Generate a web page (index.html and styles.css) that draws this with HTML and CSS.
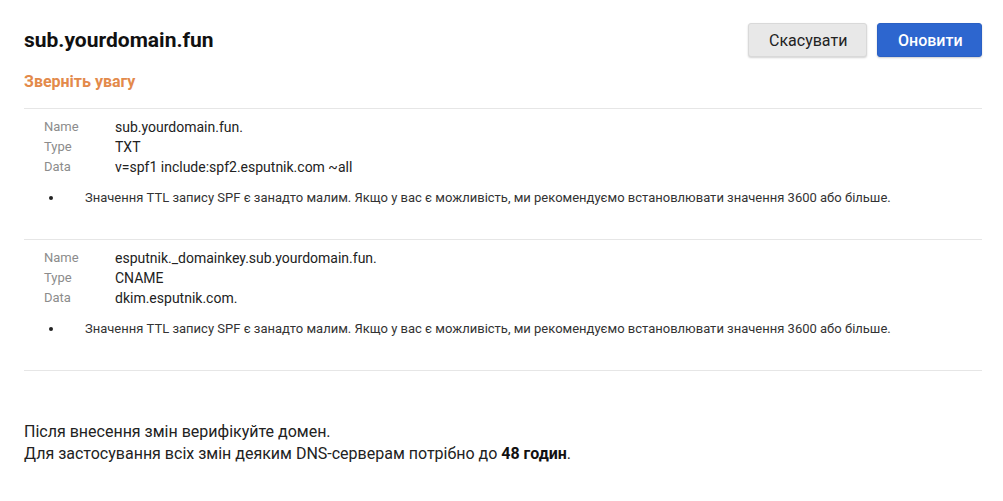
FILE: index.html
```html
<!DOCTYPE html>
<html lang="uk">
<head>
<meta charset="utf-8">
<title>DNS</title>
<link rel="stylesheet" href="styles.css">
</head>
<body>
<div class="page">
  <header class="header">
    <h1 class="title">sub.yourdomain.fun</h1>
    <div class="actions">
      <button class="btn btn-cancel">Скасувати</button>
      <button class="btn btn-primary">Оновити</button>
    </div>
  </header>
  <div class="notice">Зверніть увагу</div>

  <section class="record">
    <div class="fields">
      <div class="label">Name</div><div class="value">sub.yourdomain.fun.</div>
      <div class="label">Type</div><div class="value">TXT</div>
      <div class="label">Data</div><div class="value">v=spf1 include:spf2.esputnik.com ~all</div>
    </div>
    <ul class="warnings">
      <li class="warning"><span class="dot"></span><span>Значення TTL запису SPF є занадто малим. Якщо у вас є можливість, ми рекомендуємо встановлювати значення 3600 або більше.</span></li>
    </ul>
  </section>

  <section class="record">
    <div class="fields">
      <div class="label">Name</div><div class="value">esputnik._domainkey.sub.yourdomain.fun.</div>
      <div class="label">Type</div><div class="value">CNAME</div>
      <div class="label">Data</div><div class="value">dkim.esputnik.com.</div>
    </div>
    <ul class="warnings">
      <li class="warning"><span class="dot"></span><span>Значення TTL запису SPF є занадто малим. Якщо у вас є можливість, ми рекомендуємо встановлювати значення 3600 або більше.</span></li>
    </ul>
  </section>

  <div class="footer">
    <p>Після внесення змін верифікуйте домен.</p>
    <p>Для застосування всіх змін деяким DNS-серверам потрібно до <b>48 годин</b>.</p>
  </div>
</div>
</body>
</html>
```

FILE: styles.css
```css
* { box-sizing: border-box; }
html, body { margin: 0; padding: 0; background: #fff; }
body {
  font-family: Roboto, "Noto Sans", "Liberation Sans", sans-serif;
  color: #222;
}
.page {
  width: 1003px;
  padding: 23px 21px 0 24px;
}
.header {
  display: flex;
  justify-content: space-between;
  align-items: center;
  height: 34px;
}
.title {
  margin: 0;
  font-size: 21px;
  font-weight: 700;
  color: #111;
  letter-spacing: 0;
}
.actions {
  display: flex;
  gap: 10px;
}
.btn {
  font-family: Roboto, "Noto Sans", "Liberation Sans", sans-serif;
  font-size: 16px;
  height: 34px;
  border-radius: 3px;
  padding: 0 20px;
  cursor: pointer;
}
.btn-cancel {
  width: 119px;
  background: #e8e8e8;
  border: 1px solid #d9d9d9;
  color: #222;
  box-shadow: 0 1px 2px rgba(0,0,0,0.18);
}
.btn-primary {
  width: 105px;
  background: #2d66cf;
  border: 1px solid #2a60c4;
  color: #fff;
  font-weight: 500;
  box-shadow: 0 1px 2px rgba(0,0,0,0.2);
}
.notice {
  margin-top: 16px;
  font-size: 16px;
  font-weight: 700;
  color: #e38a4b;
  line-height: 18px;
  padding-bottom: 17px;
  border-bottom: 1px solid #e6e6e6;
}
.record {
  padding: 8px 0 31px 20px;
  border-bottom: 1px solid #e6e6e6;
}
.fields {
  display: grid;
  grid-template-columns: 71px 1fr;
  line-height: 20px;
}
.label {
  font-size: 13px;
  color: #8c8c8c;
}
.value {
  font-size: 14px;
  color: #222;
}
.warnings {
  list-style: none;
  margin: 11px 0 0 0;
  padding: 0;
}
.warning {
  display: flex;
  align-items: center;
  font-size: 13px;
  line-height: 20px;
  color: #333;
}
.dot {
  width: 4px;
  height: 4px;
  border-radius: 50%;
  background: #222;
  margin-left: 5px;
  margin-right: 32px;
  flex: none;
}
.footer {
  margin-top: 50px;
  font-size: 16px;
  line-height: 22px;
  color: #222;
}
.footer p { margin: 0; }
.footer b { font-weight: 700; color: #111; }
```
